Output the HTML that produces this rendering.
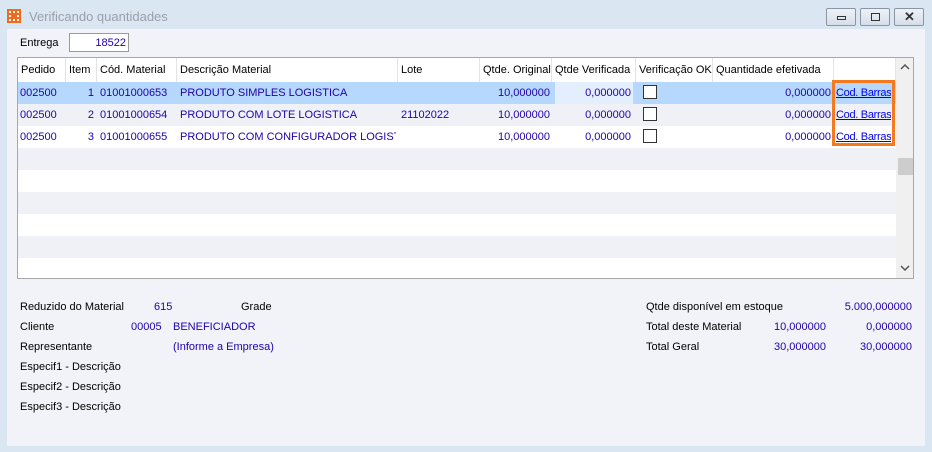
<!DOCTYPE html>
<html><head><meta charset="utf-8"><style>
*{box-sizing:border-box;margin:0;padding:0}
body{width:932px;height:452px;background:#dbe6f3;font-family:"Liberation Sans",sans-serif;font-size:11px;color:#000;position:relative;overflow:hidden}
.a{position:absolute;white-space:nowrap}
.b{color:#2200aa}
.client{position:absolute;left:7px;top:29px;width:918px;height:417px;background:#f1f3f9}
.grid{position:absolute;left:17px;top:57px;width:897px;height:222px;border:1px solid #a8a8a8;background:#fff;overflow:hidden}
.row{position:absolute;left:0;width:878px;height:22px}
.cell{position:absolute;top:0;height:22px;line-height:22px;white-space:nowrap;overflow:hidden;color:#2200aa}
.r{text-align:right}
.hd{position:absolute;top:0;height:24px;line-height:24px;border-right:1px solid #e4e4e4;padding-left:3px;background:#fff;white-space:nowrap;overflow:hidden}
.cb{position:absolute;width:14px;height:14px;border:1px solid #333;background:#fff;top:3px;left:7px}
.lnk{color:#0000ee;text-decoration:underline;letter-spacing:-0.3px}
.btn{position:absolute;top:8px;width:30px;height:18px;border:1px solid #8a96a6;border-radius:2px;background:linear-gradient(#eef2f7,#d6dee9)}
.lo{top:1px}
</style></head><body>
<div class="a" style="left:7px;top:9px;width:14px;height:14px;background:#f26b1d"></div>
<div class="a" style="left:9px;top:11px;width:10px;height:10px;border:2px dotted #fff"></div>
<div class="a" style="left:29px;top:9px;font-size:13px;color:#9aa0a8">Verificando quantidades</div>
<div class="btn" style="left:826px"><div class="a" style="left:10px;top:7px;width:9px;height:4px;border:1px solid #333"></div></div>
<div class="btn" style="left:860px"><div class="a" style="left:10px;top:4px;width:9px;height:8px;border:1px solid #333"></div></div>
<div class="btn" style="left:894px"><div class="a" style="left:9px;top:0;font-size:13px;font-weight:bold;color:#333">✕</div></div>
<div class="client"></div>
<div class="a" style="left:20px;top:37px">Entrega</div>
<div class="a" style="left:69px;top:33px;width:60px;height:19px;border:1px solid #9a9a9a;background:#fff;text-align:right;padding-right:2px;line-height:18px;color:#2200aa">18522</div>
<div class="grid">
 <div class="hd" style="left:0;width:48px">Pedido</div>
 <div class="hd" style="left:48px;width:31px">Item</div>
 <div class="hd" style="left:79px;width:80px">Cód. Material</div>
 <div class="hd" style="left:159px;width:221px">Descrição Material</div>
 <div class="hd" style="left:380px;width:82px">Lote</div>
 <div class="hd" style="left:462px;width:72px">Qtde. Original</div>
 <div class="hd" style="left:534px;width:84px">Qtde Verificada</div>
 <div class="hd" style="left:618px;width:77px">Verificação OK</div>
 <div class="hd" style="left:695px;width:121px">Quantidade efetivada</div>
 <div class="hd" style="left:816px;width:62px"></div>

 <div class="row" style="top:24px;background:#b5d8fc">
  <div class="cell" style="left:2px">002500</div><div class="cell r" style="left:48px;width:28px">1</div><div class="cell" style="left:82px">01001000653</div><div class="cell" style="left:162px;width:216px">PRODUTO SIMPLES LOGISTICA</div><div class="cell r" style="left:462px;width:70px">10,000000</div><div class="cell r" style="left:537px;width:78px;background:#e3effc;padding-right:2px">0,000000</div><div class="cb" style="left:625px"></div><div class="cell r" style="left:695px;width:118px">0,000000</div><div class="cell lnk" style="left:818px">Cod. Barras</div>
 </div>
 <div class="row" style="top:46px;background:#f0f1f7">
  <div class="cell" style="left:2px">002500</div><div class="cell r" style="left:48px;width:28px">2</div><div class="cell" style="left:82px">01001000654</div><div class="cell" style="left:162px;width:216px">PRODUTO COM LOTE LOGISTICA</div><div class="cell" style="left:383px">21102022</div><div class="cell r" style="left:462px;width:70px">10,000000</div><div class="cell r" style="left:537px;width:78px;padding-right:2px">0,000000</div><div class="cb" style="left:625px"></div><div class="cell r" style="left:695px;width:118px">0,000000</div><div class="cell lnk" style="left:818px">Cod. Barras</div>
 </div>
 <div class="row" style="top:68px;background:#fff">
  <div class="cell" style="left:2px">002500</div><div class="cell r" style="left:48px;width:28px">3</div><div class="cell" style="left:82px">01001000655</div><div class="cell" style="left:162px;width:216px">PRODUTO COM CONFIGURADOR LOGISTICA</div><div class="cell r" style="left:462px;width:70px">10,000000</div><div class="cell r" style="left:537px;width:78px;padding-right:2px">0,000000</div><div class="cb" style="left:625px"></div><div class="cell r" style="left:695px;width:118px">0,000000</div><div class="cell lnk" style="left:818px">Cod. Barras</div>
 </div>
 <div class="row" style="top:90px;background:#f0f1f7"></div>
 <div class="row" style="top:112px;background:#fff"></div>
 <div class="row" style="top:134px;background:#f0f1f7"></div>
 <div class="row" style="top:156px;background:#fff"></div>
 <div class="row" style="top:178px;background:#f0f1f7"></div>
 <div class="row" style="top:200px;background:#fff"></div>
 <div class="a" style="left:878px;top:0;width:17px;height:220px;background:#f0f0f0"></div>
 <div class="a" style="left:880px;top:100px;width:15px;height:17px;background:#cdcdcd"></div>
 <svg class="a" style="left:882px;top:5px" width="10" height="8"><path d="M1 6 L5 2 L9 6" stroke="#555" stroke-width="1.5" fill="none"/></svg>
 <svg class="a" style="left:882px;top:206px" width="10" height="8"><path d="M1 2 L5 6 L9 2" stroke="#555" stroke-width="1.5" fill="none"/></svg>
</div>
<div class="a" style="left:832px;top:80px;width:63px;height:66px;border:3px solid #f47a20"></div>

<div class="a" style="left:20px;top:301px">Reduzido do Material</div>
<div class="a b" style="left:154px;top:301px">615</div>
<div class="a" style="left:241px;top:301px">Grade</div>
<div class="a" style="left:20px;top:321px">Cliente</div>
<div class="a b" style="left:131px;top:321px">00005</div>
<div class="a b" style="left:173px;top:321px">BENEFICIADOR</div>
<div class="a" style="left:20px;top:341px">Representante</div>
<div class="a b" style="left:173px;top:341px">(Informe a Empresa)</div>
<div class="a" style="left:20px;top:361px">Especif1 - Descrição</div>
<div class="a" style="left:20px;top:381px">Especif2 - Descrição</div>
<div class="a" style="left:20px;top:401px">Especif3 - Descrição</div>

<div class="a" style="left:646px;top:301px">Qtde disponível em estoque</div>
<div class="a b" style="left:812px;top:301px;width:100px;text-align:right">5.000,000000</div>
<div class="a" style="left:646px;top:321px">Total deste Material</div>
<div class="a b" style="left:746px;top:321px;width:80px;text-align:right">10,000000</div>
<div class="a b" style="left:832px;top:321px;width:80px;text-align:right">0,000000</div>
<div class="a" style="left:646px;top:341px">Total Geral</div>
<div class="a b" style="left:746px;top:341px;width:80px;text-align:right">30,000000</div>
<div class="a b" style="left:832px;top:341px;width:80px;text-align:right">30,000000</div>
</body></html>
